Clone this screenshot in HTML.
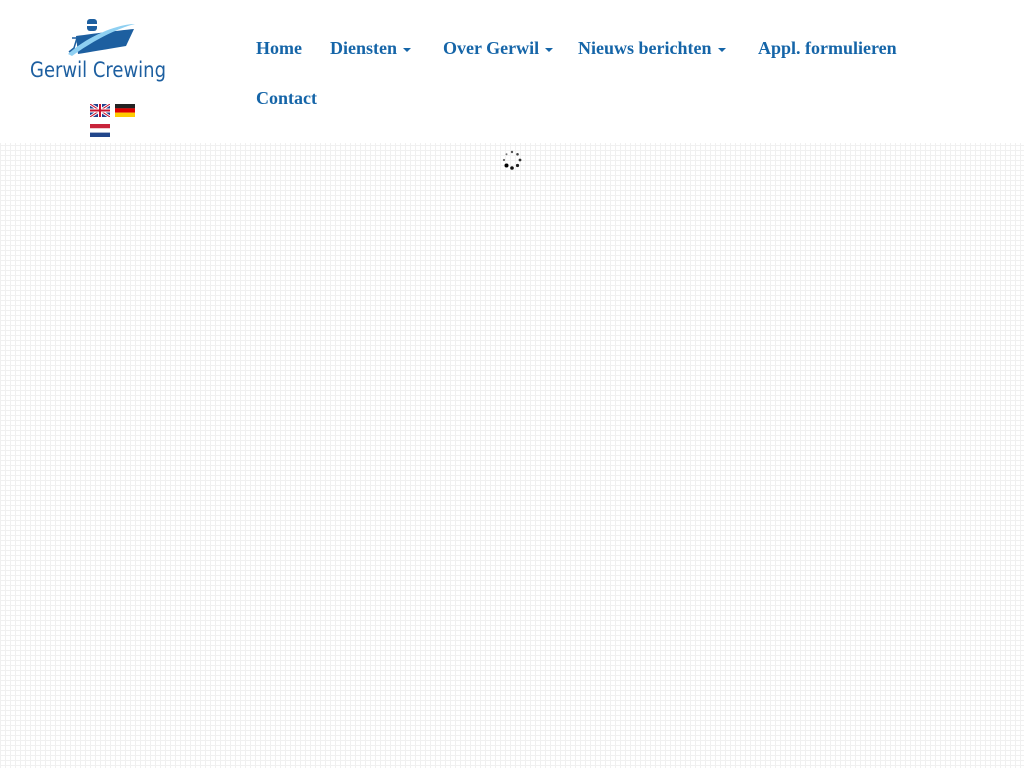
<!DOCTYPE html>
<html><head><meta charset="utf-8"><style>
html,body{margin:0;padding:0;width:1024px;height:768px;overflow:hidden}
body{background-color:#fff;background-image:linear-gradient(#f0f0f0 1px,transparent 1px),linear-gradient(90deg,#f0f0f0 1px,transparent 1px);background-size:5px 5px;font-family:"Liberation Serif",serif}
.hdr{position:absolute;left:0;top:0;width:1024px;height:143px;background:#fff}
.nav a{position:absolute;color:#1565a8;font-weight:bold;font-size:18px;text-decoration:none;white-space:nowrap}
.car{display:inline-block;width:0;height:0;border-left:4px solid transparent;border-right:4px solid transparent;border-top:4px solid #1565a8;vertical-align:middle;margin-left:6px}
.flag{position:absolute;width:20px;height:13px}
</style></head><body>
<div class="hdr">
<svg style="position:absolute;left:28px;top:16px" width="140" height="66" viewBox="0 0 140 66">
<rect x="59" y="3" width="10" height="12" rx="3" fill="#1d5fa0"/>
<rect x="59" y="8" width="10" height="2" fill="#fff"/>
<path d="M48 20 C70 17 95 14 106 13 L98 30 C80 33 62 36 50 38 Z" fill="#1d5fa0"/>
<path d="M40 38 C60 20 90 8 107 8 C90 12 66 24 44 40 Z" fill="#8fd0f2"/>
<path d="M44 22 L49 22 L46 32 L41 36" stroke="#1d5fa0" stroke-width="1.5" fill="none"/>
<text x="2" y="61" font-family="DejaVu Sans,sans-serif" font-size="21" fill="#1d5fa0" textLength="136" lengthAdjust="spacingAndGlyphs">Gerwil Crewing</text>
</svg>
<svg class="flag" style="left:90px;top:104px" viewBox="0 0 20 13"><rect width="20" height="13" fill="#23408e"/><path d="M0 0L20 13M20 0L0 13" stroke="#fff" stroke-width="3"/><path d="M0 0L20 13M20 0L0 13" stroke="#c8102e" stroke-width="1"/><path d="M10 0V13M0 6.5H20" stroke="#fff" stroke-width="4"/><path d="M10 0V13M0 6.5H20" stroke="#c8102e" stroke-width="2"/></svg>
<svg class="flag" style="left:115px;top:104px" viewBox="0 0 20 13"><rect width="20" height="4.4" fill="#222"/><rect y="4.3" width="20" height="4.4" fill="#d00"/><rect y="8.6" width="20" height="4.4" fill="#fc0"/></svg>
<svg class="flag" style="left:90px;top:124px" viewBox="0 0 20 13"><rect width="20" height="4.4" fill="#c8233a"/><rect y="4.3" width="20" height="4.4" fill="#fff"/><rect y="8.6" width="20" height="4.4" fill="#21468b"/></svg>
<div class="nav">
<a style="left:256px;top:38px">Home</a>
<a style="left:330px;top:38px">Diensten<span class="car"></span></a>
<a style="left:443px;top:38px">Over Gerwil<span class="car"></span></a>
<a style="left:578px;top:38px">Nieuws berichten<span class="car"></span></a>
<a style="left:758px;top:38px">Appl. formulieren</a>
<a style="left:256px;top:88px">Contact</a>
</div>
</div>
<svg style="position:absolute;left:500px;top:148px" width="24" height="24" viewBox="0 0 24 24">
<circle cx="12" cy="4" r="1.2" fill="#555"/><circle cx="17.5" cy="6.3" r="1.3" fill="#444"/><circle cx="20" cy="12" r="1.4" fill="#333"/><circle cx="17.5" cy="17.5" r="1.6" fill="#222"/><circle cx="12" cy="20" r="1.8" fill="#111"/><circle cx="6.5" cy="17.5" r="2" fill="#000"/><circle cx="4" cy="12" r="1.1" fill="#666"/><circle cx="6.5" cy="6.3" r="1" fill="#777"/>
</svg>
</body></html>
